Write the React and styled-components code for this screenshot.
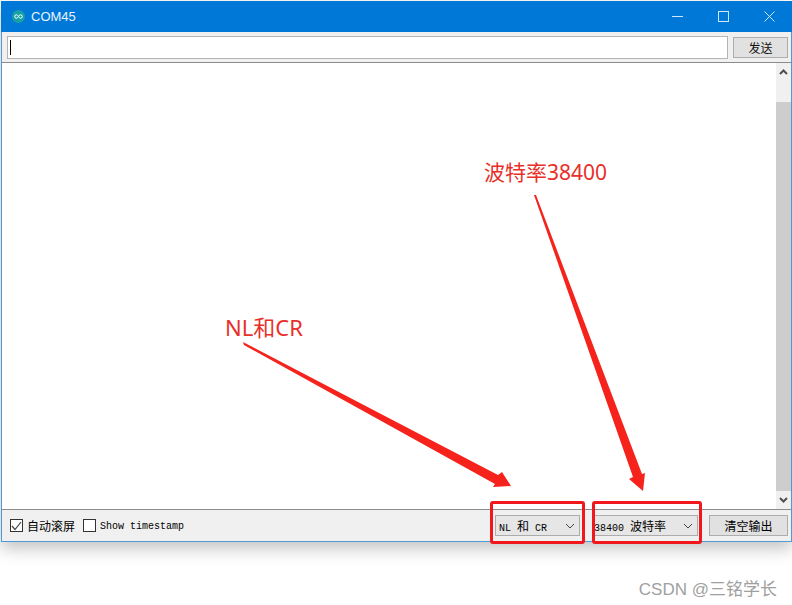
import React from "react";
import styled, { createGlobalStyle } from "styled-components";

const GlobalStyle = createGlobalStyle`
  html, body {
    margin: 0;
    padding: 0;
    background: #ffffff;
  }
`;

const MONO = `"Liberation Mono", "Noto Sans CJK SC", monospace`;
const CJK = `"Noto Sans CJK SC", "Liberation Sans", sans-serif`;

function Chevron() {
  return (
    <svg width="10" height="6" viewBox="0 0 10 6">
      <path d="M1 1l4 4 4-4" fill="none" stroke="#444" strokeWidth="1" />
    </svg>
  );
}

function App() {
  return (
    <Page>
      <GlobalStyle />
      <Window>
        <TitleBar>
          <AppIcon>
            <svg width="9" height="5" viewBox="0 0 18 10">
              <path
                d="M5 1.5a3.5 3.5 0 1 0 0 7c3 0 5-7 8-7a3.5 3.5 0 1 1 0 7c-3 0-5-7-8-7z"
                fill="none"
                stroke="#fff"
                strokeWidth="2"
              />
            </svg>
          </AppIcon>
          <WindowTitle>COM45</WindowTitle>
          <WindowControls>
            <ControlButton>
              <svg width="11" height="11" viewBox="0 0 11 11">
                <path d="M0 5.5h11" stroke="#cfe8fb" strokeWidth="1" />
              </svg>
            </ControlButton>
            <ControlButton>
              <svg width="11" height="11" viewBox="0 0 11 11">
                <rect x="0.5" y="0.5" width="10" height="10" fill="none" stroke="#cfe8fb" strokeWidth="1" />
              </svg>
            </ControlButton>
            <ControlButton>
              <svg width="11" height="11" viewBox="0 0 11 11">
                <path d="M0.5 0.5l10 10M10.5 0.5l-10 10" stroke="#cfe8fb" strokeWidth="1" />
              </svg>
            </ControlButton>
          </WindowControls>
        </TitleBar>

        <SendBar>
          <SendInput>
            <Caret />
          </SendInput>
          <SendButton>发送</SendButton>
        </SendBar>

        <Body>
          <Output />
          <ScrollBar>
            <ScrollArrow>
              <svg width="9" height="6" viewBox="0 0 9 6">
                <path d="M1 5l3.5-3.5L8 5" fill="none" stroke="#505050" strokeWidth="2" />
              </svg>
            </ScrollArrow>
            <ScrollTrack>
              <ScrollThumb />
            </ScrollTrack>
            <ScrollArrow>
              <svg width="9" height="6" viewBox="0 0 9 6">
                <path d="M1 1l3.5 3.5L8 1" fill="none" stroke="#505050" strokeWidth="2" />
              </svg>
            </ScrollArrow>
          </ScrollBar>
        </Body>

        <Footer>
          <CheckLabel>
            <CheckBox>
              <svg width="11" height="10" viewBox="0 0 11 10">
                <path d="M1 5l3 3.5L10 1" fill="none" stroke="#444" strokeWidth="1.2" />
              </svg>
            </CheckBox>
            <CjkText>自动滚屏</CjkText>
          </CheckLabel>
          <CheckLabel>
            <CheckBox />
            <TimestampText>Show timestamp</TimestampText>
          </CheckLabel>
          <Spacer />
          <Select $width={85} $inset={3} $gap={12}>
            <MonoText>NL <CjkText>和</CjkText> CR</MonoText>
            <Chevron />
          </Select>
          <Select $width={106} $inset={1} $gap={11}>
            <MonoText>38400 <CjkText>波特率</CjkText></MonoText>
            <Chevron />
          </Select>
          <ClearButton>清空输出</ClearButton>
        </Footer>
      </Window>

      <Note $left={484} $top={158} $size={21}>波特率38400</Note>
      <Note $left={225} $top={313} $size={22}>NL和CR</Note>

      <Highlight $left={490} $width={95} />
      <Highlight $left={592} $width={110} />

      <ArrowLayer width="792" height="605" viewBox="0 0 792 605">
        <polygon
          points="243,342 498,475 502,472 511,486 493,487 495,484 244,345"
          fill="#f5231b"
        />
        <polygon
          points="534,195 536,195 642,474 645,473 643,491 629,479 633,477"
          fill="#f5231b"
        />
      </ArrowLayer>

      <Watermark>CSDN @三铭学长</Watermark>
    </Page>
  );
}

export default App;

const Page = styled.div`
  position: relative;
  width: 792px;
  height: 605px;
  overflow: hidden;
  background: #ffffff;
`;

const Window = styled.div`
  width: 791px;
  height: 541px;
  margin: 1px 0 0 1px;
  display: flex;
  flex-direction: column;
  box-sizing: border-box;
  border: 1px solid #4a9bd8;
  border-top: none;
  background: #f0f0f0;
  box-shadow: 0 6px 16px rgba(0, 0, 0, 0.25);
`;

const TitleBar = styled.div`
  height: 31px;
  flex: none;
  margin: 0 -1px;
  display: flex;
  align-items: center;
  padding-left: 11px;
  background: #0078d7;
`;

const AppIcon = styled.div`
  width: 13px;
  height: 13px;
  border-radius: 50%;
  background: #17a1a5;
  display: flex;
  align-items: center;
  justify-content: center;
`;

const WindowTitle = styled.div`
  margin-left: 6px;
  font: 13px "Liberation Sans", Arial, sans-serif;
  color: #e8f4fd;
`;

const WindowControls = styled.div`
  margin-left: auto;
  display: flex;
`;

const ControlButton = styled.div`
  width: 46px;
  height: 31px;
  display: flex;
  align-items: center;
  justify-content: center;
`;

const SendBar = styled.div`
  height: 31px;
  flex: none;
  display: flex;
  align-items: center;
  padding: 0 3px 0 5px;
  gap: 5px;
  box-sizing: border-box;
  border-bottom: 1px solid #8c8c8c;
`;

const SendInput = styled.div`
  flex: 1;
  height: 23px;
  display: flex;
  align-items: center;
  padding-left: 2px;
  box-sizing: border-box;
  background: #ffffff;
  border: 1px solid #b4b4b4;
`;

const Caret = styled.div`
  width: 1px;
  height: 15px;
  background: #000000;
`;

const SendButton = styled.div`
  width: 55px;
  height: 21px;
  display: flex;
  align-items: center;
  justify-content: center;
  box-sizing: border-box;
  background: #e1e1e1;
  border: 1px solid #adadad;
  font: 12px ${CJK};
  color: #111111;
`;

const Body = styled.div`
  flex: 1;
  min-height: 0;
  display: flex;
  background: #ffffff;
`;

const Output = styled.div`
  flex: 1;
`;

const ScrollBar = styled.div`
  width: 15px;
  flex: none;
  display: flex;
  flex-direction: column;
  background: #f0f0f0;
`;

const ScrollArrow = styled.div`
  height: 18px;
  flex: none;
  display: flex;
  align-items: center;
  justify-content: center;
`;

const ScrollTrack = styled.div`
  flex: 1;
  padding-top: 21px;
  display: flex;
`;

const ScrollThumb = styled.div`
  flex: 1;
  background: #cdcdcd;
`;

const Footer = styled.div`
  height: 32px;
  flex: none;
  display: flex;
  align-items: center;
  padding: 0 3px 0 8px;
  box-sizing: border-box;
  border-top: 1px solid #8c8c8c;
  color: #000000;
`;

const CheckLabel = styled.div`
  display: flex;
  align-items: center;
  gap: 4px;
  margin-right: 8px;
`;

const CheckBox = styled.div`
  width: 13px;
  height: 13px;
  display: flex;
  align-items: center;
  justify-content: center;
  box-sizing: border-box;
  background: #ffffff;
  border: 1px solid #333333;
`;

const CjkText = styled.span`
  font: 12px ${CJK};
`;

const MonoText = styled.span`
  font: 10px ${MONO};
  white-space: pre;
`;

const TimestampText = styled(MonoText)`
  margin-top: 1px;
`;

const Spacer = styled.div`
  flex: 1;
`;

const Select = styled.div`
  width: ${(props) => props.$width}px;
  height: 21px;
  margin-right: ${(props) => props.$gap}px;
  display: flex;
  align-items: center;
  justify-content: space-between;
  padding: 0 4px 0 ${(props) => props.$inset}px;
  box-sizing: border-box;
  background: #e6e6e6;
  border: 1px solid #acacac;
`;

const ClearButton = styled.div`
  width: 79px;
  height: 21px;
  display: flex;
  align-items: center;
  justify-content: center;
  box-sizing: border-box;
  background: #e1e1e1;
  border: 1px solid #adadad;
  font: 12px ${CJK};
`;

const Note = styled.div`
  position: absolute;
  left: ${(props) => props.$left}px;
  top: ${(props) => props.$top}px;
  font: ${(props) => props.$size}px/28px "Noto Sans", ${CJK};
  color: #e8302a;
  white-space: nowrap;
`;

const Highlight = styled.div`
  position: absolute;
  left: ${(props) => props.$left}px;
  top: 501px;
  width: ${(props) => props.$width}px;
  height: 43px;
  box-sizing: border-box;
  border: 3px solid #f0181c;
  border-radius: 3px;
`;

const ArrowLayer = styled.svg`
  position: absolute;
  left: 0;
  top: 0;
  pointer-events: none;
`;

const Watermark = styled.div`
  position: absolute;
  right: 15px;
  top: 575px;
  font: 17px "Liberation Sans", ${CJK};
  color: #a0a0a0;
  white-space: nowrap;
`;
